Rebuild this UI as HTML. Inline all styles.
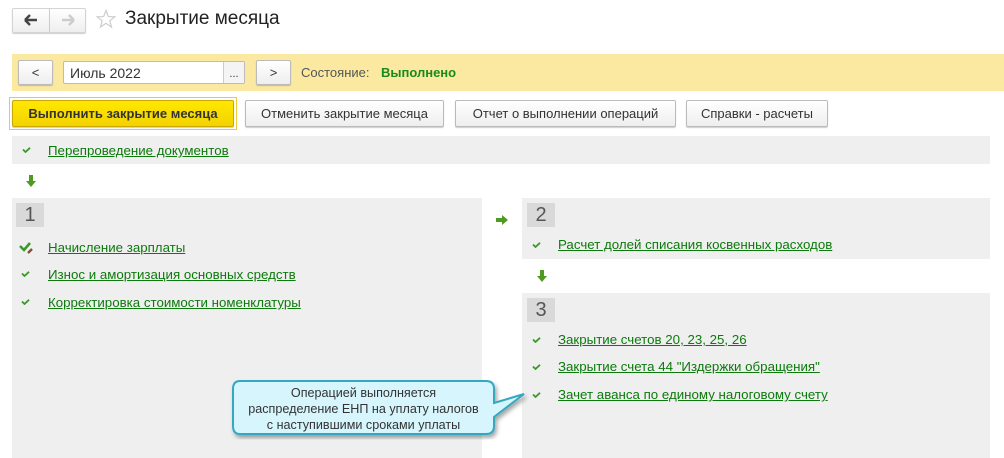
<!DOCTYPE html>
<html><head><meta charset="utf-8"><style>
*{box-sizing:border-box;margin:0;padding:0}
body{width:1004px;height:458px;background:#fff;font-family:"Liberation Sans",Arial,sans-serif;font-size:13px;color:#333;position:relative;overflow:hidden}
.a{position:absolute}
.btn{position:absolute;border:1px solid #bbb;border-radius:2px;background:linear-gradient(#fff,#eee);box-shadow:0 1px 1px rgba(0,0,0,.2);text-align:center;color:#333;font-size:13px}
.gray{position:absolute;background:#efefef}
.lnk{position:absolute;color:#0c7a0c;text-decoration:underline;font-size:13.3px;white-space:nowrap}
.chk{position:absolute;width:9px;height:6px}
.num{position:absolute;width:28px;height:24px;background:#d9d9d9;color:#555;font-size:20px;text-align:center;line-height:24px}
</style></head><body>
<div class="btn" style="left:12px;top:8px;width:74px;height:25px;border-color:#d4d4d4"></div>
<div class="a" style="left:49px;top:9px;width:1px;height:23px;background:#ccc"></div>
<svg class="a" style="left:24px;top:14px" width="14" height="12"><path d="M1 6H13M1 6L6 1M1 6L6 11" stroke="#444" stroke-width="2.4" fill="none"/></svg>
<svg class="a" style="left:61px;top:14px" width="14" height="12"><path d="M1 6H13M13 6L8 1M13 6L8 11" stroke="#ccc" stroke-width="2.4" fill="none"/></svg>
<svg class="a" style="left:96px;top:9px" width="20" height="20"><path d="M10 1.5L12.4 7.6 18.8 7.8 13.8 11.8 15.5 18 10 14.4 4.5 18 6.2 11.8 1.2 7.8 7.6 7.6Z" fill="none" stroke="#ccc" stroke-width="1.2"/></svg>
<div class="a" style="left:125px;top:8px;font-size:19px;color:#222">Закрытие месяца</div>

<div class="a" style="left:12px;top:54px;width:992px;height:37px;background:#fbe9a1"></div>
<div class="btn" style="left:18px;top:60px;width:35px;height:25px;line-height:23px">&lt;</div>
<div class="a" style="left:63px;top:61px;width:182px;height:23px;background:#fff;border:1px solid #bbb;border-radius:2px"></div>
<div class="a" style="left:70px;top:65px;font-size:14px;color:#333">Июль 2022</div>
<div class="a" style="left:223px;top:62px;width:21px;height:21px;border-left:1px solid #ccc;background:#f4f4f4;text-align:center;line-height:24px;font-size:11px">...</div>
<div class="btn" style="left:256px;top:60px;width:35px;height:25px;line-height:23px">&gt;</div>
<div class="a" style="left:301px;top:65px;color:#555">Состояние:</div>
<div class="a" style="left:381px;top:65px;color:#1a8a1a;font-weight:bold">Выполнено</div>

<div class="a" style="left:9px;top:97px;width:228px;height:33px;border:1px solid #f0c93a"></div>
<div class="btn" style="left:12px;top:100px;width:222px;height:27px;line-height:25px;background:linear-gradient(#ffe800,#f3d200);border-color:#c9a800;font-weight:bold;color:#333">Выполнить закрытие месяца</div>
<div class="btn" style="left:245px;top:100px;width:199px;height:27px;line-height:25px">Отменить закрытие месяца</div>
<div class="btn" style="left:455px;top:100px;width:221px;height:27px;line-height:25px">Отчет о выполнении операций</div>
<div class="btn" style="left:686px;top:100px;width:142px;height:27px;line-height:25px">Справки - расчеты</div>

<div class="gray" style="left:12px;top:136px;width:978px;height:28px"></div>
<svg class="chk" style="left:22px;top:147px" viewBox="0 0 9 6"><path d="M1 2.5L3.5 5 8 0.8" stroke="#3a9a28" stroke-width="1.8" fill="none"/></svg>
<div class="lnk" style="left:48px;top:143px">Перепроведение документов</div>

<svg class="a" style="left:26px;top:175px" width="10" height="12"><path d="M3 0H7V6H10L5 12 0 6H3Z" fill="#4f9a22"/></svg>

<div class="gray" style="left:12px;top:198px;width:470px;height:260px"></div>
<div class="num" style="left:16px;top:203px">1</div>
<svg class="a" style="left:19px;top:241px" width="16" height="14"><path d="M1 5L5 9 11 2" stroke="#3a9a28" stroke-width="2.6" fill="none"/><path d="M9 12L13 8" stroke="#8a4a3a" stroke-width="2.4"/></svg>
<div class="lnk" style="left:48px;top:240px">Начисление зарплаты</div>
<svg class="chk" style="left:21px;top:271px" viewBox="0 0 9 6"><path d="M1 2.5L3.5 5 8 0.8" stroke="#3a9a28" stroke-width="1.8" fill="none"/></svg>
<div class="lnk" style="left:48px;top:267px">Износ и амортизация основных средств</div>
<svg class="chk" style="left:21px;top:299px" viewBox="0 0 9 6"><path d="M1 2.5L3.5 5 8 0.8" stroke="#3a9a28" stroke-width="1.8" fill="none"/></svg>
<div class="lnk" style="left:48px;top:295px">Корректировка стоимости номенклатуры</div>

<svg class="a" style="left:496px;top:215px" width="12" height="10"><path d="M0 3H6V0L12 5 6 10V7H0Z" fill="#4f9a22"/></svg>

<div class="gray" style="left:522px;top:198px;width:468px;height:61px"></div>
<div class="num" style="left:527px;top:203px">2</div>
<svg class="chk" style="left:532px;top:242px" viewBox="0 0 9 6"><path d="M1 2.5L3.5 5 8 0.8" stroke="#3a9a28" stroke-width="1.8" fill="none"/></svg>
<div class="lnk" style="left:558px;top:237px">Расчет долей списания косвенных расходов</div>
<svg class="a" style="left:537px;top:270px" width="10" height="12"><path d="M3 0H7V6H10L5 12 0 6H3Z" fill="#4f9a22"/></svg>

<div class="gray" style="left:522px;top:293px;width:468px;height:165px"></div>
<div class="num" style="left:527px;top:298px">3</div>
<svg class="chk" style="left:532px;top:337px" viewBox="0 0 9 6"><path d="M1 2.5L3.5 5 8 0.8" stroke="#3a9a28" stroke-width="1.8" fill="none"/></svg>
<div class="lnk" style="left:558px;top:332px">Закрытие счетов 20, 23, 25, 26</div>
<svg class="chk" style="left:532px;top:364px" viewBox="0 0 9 6"><path d="M1 2.5L3.5 5 8 0.8" stroke="#3a9a28" stroke-width="1.8" fill="none"/></svg>
<div class="lnk" style="left:558px;top:359px">Закрытие счета 44 "Издержки обращения"</div>
<svg class="chk" style="left:532px;top:392px" viewBox="0 0 9 6"><path d="M1 2.5L3.5 5 8 0.8" stroke="#3a9a28" stroke-width="1.8" fill="none"/></svg>
<div class="lnk" style="left:558px;top:387px">Зачет аванса по единому налоговому счету</div>

<svg class="a" style="left:228px;top:376px" width="305" height="70"><defs><filter id="s"><feDropShadow dx="2" dy="3" stdDeviation="2" flood-opacity=".35"/></filter></defs>
<path d="M12 5H258Q266 5 266 13V27L296 18 266 41V50Q266 58 258 58H12Q5 58 5 50V13Q5 5 12 5Z" fill="#d6f5fc" stroke="#36a8c0" stroke-width="2" filter="url(#s)"/></svg>
<div class="a" style="left:233px;top:385px;width:261px;text-align:center;font-size:12.6px;line-height:16px;color:#333">Операцией выполняется<br>распределение ЕНП на уплату налогов<br>с наступившими сроками уплаты</div>
</body></html>
